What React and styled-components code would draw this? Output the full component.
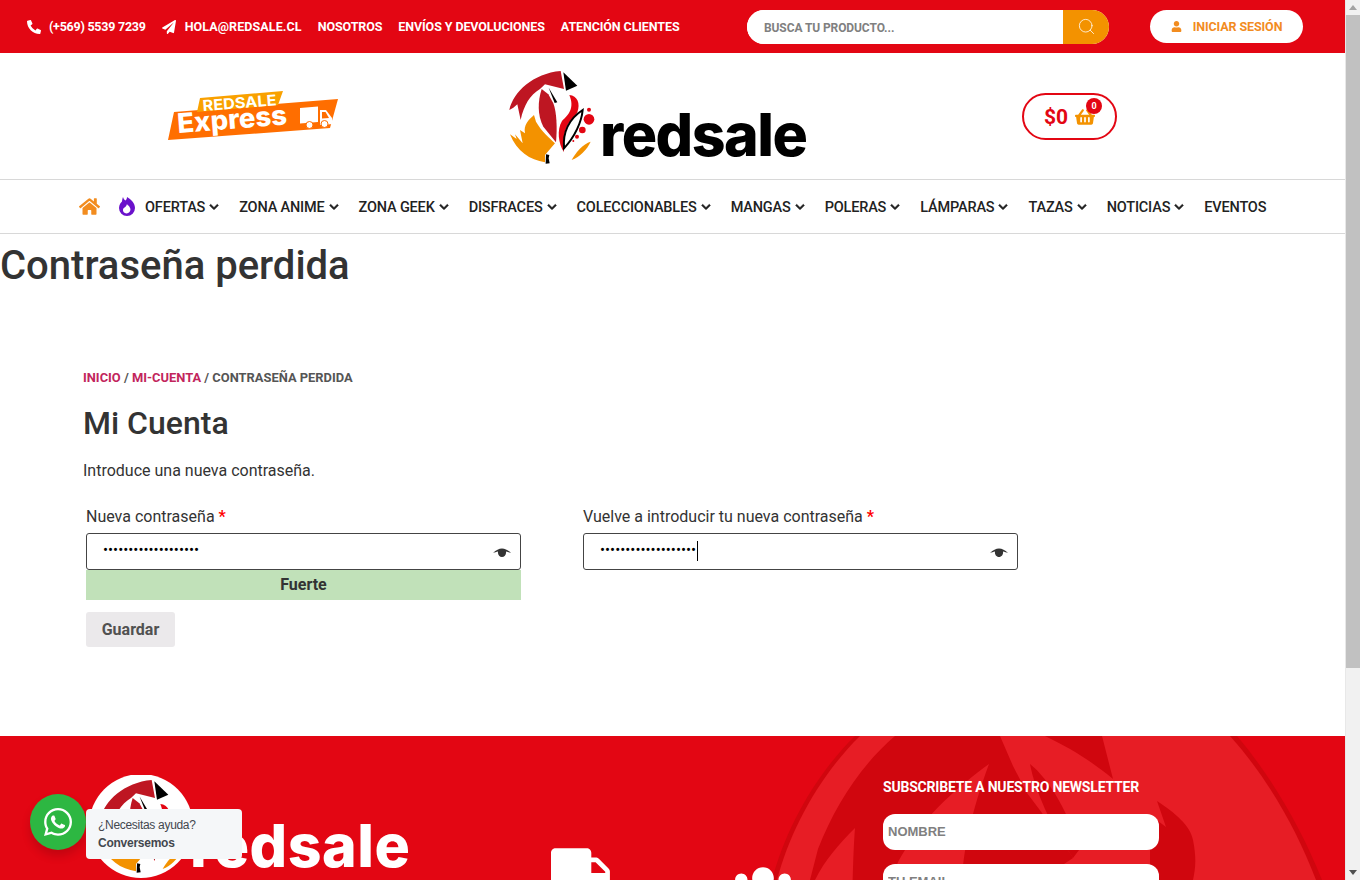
import React from "react";
import styled, { createGlobalStyle } from "styled-components";
import {
  FaPhoneAlt,
  FaPaperPlane,
  FaHome,
  FaChevronDown,
  FaUser,
  FaShoppingBasket,
  FaWhatsapp,
  FaTruck,
  FaUsers,
} from "react-icons/fa";
import { Search } from "lucide-react";

const RED = "#e30613";
const ORANGE = "#f39200";

const GlobalStyle = createGlobalStyle`
  body {
    margin: 0 15px 0 0;
    background: #fff;
    font-family: Roboto, "Liberation Sans", sans-serif;
    color: #333;
  }
  * { box-sizing: border-box; }
`;

const TopBar = styled.div`
  height: 53px;
  background: ${RED};
  display: flex;
  align-items: center;
  padding: 0 42px 0 27px;
`;

const TopLinks = styled.div`
  display: flex;
  align-items: center;
  gap: 16px;
`;

const TopLink = styled.a`
  display: flex;
  align-items: center;
  gap: ${(p) => p.$gap || 8}px;
  color: #fff;
  font-size: 12.5px;
  font-weight: 700;
  letter-spacing: ${(p) => p.$spacing ?? -0.1}px;
  white-space: nowrap;
`;

const TopRight = styled.div`
  margin-left: auto;
  display: flex;
  align-items: center;
  gap: 41px;
`;

const SearchBox = styled.form`
  width: 362px;
  height: 34px;
  margin-top: 1px;
  display: flex;
  border-radius: 17px;
  overflow: hidden;
  background: #fff;
`;

const SearchInput = styled.input`
  flex: 1;
  min-width: 0;
  border: none;
  outline: none;
  padding: 1px 0 0 17px;
  font-family: Roboto, sans-serif;
  font-size: 12px;
  font-weight: 700;
  letter-spacing: -0.1px;
  &::placeholder {
    color: #808080;
    opacity: 1;
  }
`;

const SearchButton = styled.button`
  width: 46px;
  border: none;
  padding: 0 0 2px;
  background: ${ORANGE};
  color: #fff;
  display: flex;
  align-items: center;
  justify-content: center;
`;

const LoginButton = styled.a`
  width: 153px;
  height: 33px;
  border-radius: 17px;
  background: #fff;
  color: #f28c1f;
  display: flex;
  align-items: center;
  justify-content: center;
  gap: 11px;
  font-size: 12.5px;
  font-weight: 700;
  letter-spacing: -0.1px;
`;

const BrandRow = styled.div`
  height: 127px;
  display: flex;
  align-items: center;
  padding-left: 168px;
  border-bottom: 1px solid #d8d8d8;
`;

const ExpressLogo = styled.svg`
  width: 170px;
  height: 50px;
  margin-top: -1px;
  flex: none;
`;

const MainLogo = styled.svg`
  width: 310px;
  height: 105px;
  margin: 3px 0 0 162px;
  flex: none;
`;

const CartPill = styled.a`
  position: relative;
  width: 95px;
  height: 47px;
  margin: 0 0 0 212px;
  border: 2px solid ${RED};
  border-radius: 24px;
  display: flex;
  align-items: center;
  padding: 1px 0 0 20px;
  gap: 7px;
  color: ${RED};
  font-size: 21px;
  font-weight: 700;
`;

const CartBadge = styled.span`
  position: absolute;
  top: 3px;
  right: 13px;
  width: 16px;
  height: 16px;
  border-radius: 50%;
  background: ${RED};
  color: #fff;
  font-size: 9px;
  font-weight: 700;
  display: flex;
  align-items: center;
  justify-content: center;
`;

const Nav = styled.nav`
  height: 54px;
  border-bottom: 1px solid #d8d8d8;
  display: flex;
  align-items: center;
  padding: 1px 0 0 79px;
`;

const NavIcon = styled.span`
  display: flex;
  margin: 0 ${(p) => p.$gap}px 2px 0;
  color: ${(p) => p.$color};
`;

const NavItem = styled.a`
  display: flex;
  align-items: center;
  gap: 4px;
  margin-right: 20px;
  color: #222;
  font-size: 14.5px;
  font-weight: 500;
  letter-spacing: -0.17px;
  white-space: nowrap;
`;

const NavChevron = styled(FaChevronDown)`
  stroke: currentColor;
  stroke-width: 30;
`;

const PageTitle = styled.h1`
  margin: 0;
  height: 61px;
  padding-top: 1px;
  font-size: 40px;
  line-height: 61px;
  font-weight: 500;
  color: #333;
`;

const Content = styled.main`
  padding: 74px 83px 0;
  height: 441px;
`;

const Breadcrumb = styled.div`
  font-size: 12.9px;
  line-height: 18px;
  font-weight: 700;
  color: #555;
  text-transform: uppercase;
  a {
    color: #c2255c;
  }
`;

const AccountTitle = styled.h2`
  margin: 14px 0 0;
  font-size: 32px;
  line-height: 44px;
  font-weight: 500;
  color: #333;
`;

const Intro = styled.p`
  margin: 14px 0 0;
  font-size: 16px;
  line-height: 24px;
  color: #333;
`;

const FormRow = styled.div`
  margin-top: 22px;
  padding-left: 3px;
  display: flex;
  gap: 62px;
`;

const Column = styled.div`
  width: 435px;
`;

const Label = styled.label`
  display: block;
  font-size: 16px;
  line-height: 24px;
  color: #333;
  margin-bottom: 4px;
  b {
    color: #f00;
    font-weight: 700;
  }
`;

const PasswordWrap = styled.div`
  position: relative;
  height: 37px;
`;

const PasswordInput = styled.input`
  width: 100%;
  height: 100%;
  border: 1px solid #444;
  border-radius: 3px;
  outline: none;
  padding: 0 40px 3px 16px;
  font-family: Roboto, sans-serif;
  font-size: 15px;
  color: #000;
`;

const Caret = styled.span`
  position: absolute;
  left: 114px;
  top: 8px;
  width: 1px;
  height: 20px;
  background: #000;
`;

const EyeIcon = styled.svg`
  position: absolute;
  top: 13px;
  right: 10px;
  width: 18px;
  height: 14px;
`;

const Strength = styled.div`
  height: 30px;
  background: #c1e1b9;
  text-align: center;
  font-size: 16px;
  line-height: 30px;
  font-weight: 700;
  color: #333;
`;

const SaveButton = styled.button`
  display: block;
  margin: 12px 0 0 3px;
  width: 89px;
  height: 35px;
  border: none;
  border-radius: 3px;
  background: #ebe9eb;
  color: #515151;
  font-family: Roboto, sans-serif;
  font-size: 16px;
  font-weight: 700;
`;

const Footer = styled.footer`
  position: relative;
  height: 410px;
  background: ${RED};
  overflow: hidden;
  display: flex;
  padding: 39px 0 0 89px;
`;

const FooterFlames = styled.svg`
  position: absolute;
  left: 0;
  top: 0;
  width: 1345px;
  height: 410px;
`;

const FooterLogo = styled.svg`
  position: relative;
  width: 330px;
  height: 110px;
  flex: none;
`;

const FooterIcons = styled.div`
  position: relative;
  display: flex;
  gap: 119px;
  margin: 67px 0 0 132px;
  color: #fff;
  height: 62px;
`;

const PeopleIcon = styled(FaUsers)`
  margin-top: 16px;
`;

const Newsletter = styled.form`
  position: relative;
  width: 276px;
  margin-left: 89px;
  display: flex;
  flex-direction: column;
  gap: 14px;
`;

const NewsTitle = styled.h3`
  margin: 2px 0 3px;
  color: #fff;
  font-size: 14px;
  line-height: 20px;
  font-weight: 700;
  letter-spacing: -0.2px;
  white-space: nowrap;
`;

const NewsInput = styled.input`
  height: 36px;
  border: none;
  outline: none;
  border-radius: 12px;
  padding: 0 5px 2px;
  background: #fff;
  font-family: "Liberation Sans", Arial, sans-serif;
  font-size: 13px;
  font-weight: 700;
  &::placeholder {
    color: #808080;
    opacity: 1;
  }
`;

const ChatWidget = styled.div`
  position: fixed;
  left: 30px;
  top: 794px;
  display: flex;
  align-items: flex-start;
`;

const ChatBubble = styled.a`
  width: 56px;
  height: 56px;
  border-radius: 50%;
  background: #2db742;
  color: #fff;
  display: flex;
  align-items: center;
  justify-content: center;
  box-shadow: 0 6px 10px rgba(0, 0, 0, 0.15);
`;

const ChatCard = styled.div`
  margin-top: 15px;
  width: 156px;
  height: 50px;
  padding: 8px 12px;
  border-radius: 4px;
  background: #f5f7f9;
  color: #43474e;
  font-family: "Liberation Sans", Arial, sans-serif;
  font-size: 12px;
  line-height: 17.5px;
  letter-spacing: -0.3px;
  b {
    display: block;
    letter-spacing: -0.25px;
  }
`;

const ScrollBar = styled.div`
  position: fixed;
  top: 0;
  right: 0;
  width: 15px;
  height: 100vh;
  background: #f1f1f1;
  border-left: 1px solid #e8e8e8;
  display: flex;
  flex-direction: column;
  align-items: center;
`;

const ScrollArrow = styled.span`
  width: 0;
  height: 0;
  margin: ${(p) => (p.$down ? "auto 0 5px" : "5px 0 4px")};
  border-left: 4px solid transparent;
  border-right: 4px solid transparent;
  border-bottom: ${(p) => (p.$down ? "0" : "5px solid #a3a3a3")};
  border-top: ${(p) => (p.$down ? "5px solid #505050" : "0")};
`;

const ScrollThumb = styled.span`
  width: 100%;
  height: 653px;
  margin-top: 1px;
  background: #c1c1c1;
`;

const FoxMark = () => (
  <>
    <path
      fill="#be1622"
      d="M28 135C40 80 100 25 182 18L192 72L135 58L120 72C90 90 72 120 62 165L52 118L40 128Z"
    />
    <path
      fill="#be1622"
      d="M125 72C113 110 112 150 130 185L168 232C172 190 170 140 160 115L145 88Z"
    />
    <path
      fill={ORANGE}
      d="M102 150L108 170C125 200 150 220 165 235L135 270L135 292C90 285 50 260 30 208L50 222L45 208L68 235L60 195L75 205C70 180 85 165 102 150Z"
    />
    <path fill="#000" d="M190 22L232 62L198 77Z" />
    <path fill="#000" d="M146 68L172 112L164 114Z" />
    <path fill="#000" d="M138 268L148 270L146 280L149 295L137 296Z" />
    <path
      fill="#e30613"
      d="M208 90C232 92 242 115 232 142C224 158 208 165 198 190C190 215 190 240 192 262C175 235 170 195 186 168C205 150 225 130 208 90Z"
    />
    <path
      fill="#fff"
      stroke="#000"
      strokeWidth="6"
      d="M248 135C245 170 225 215 192 250C188 200 210 160 248 135Z"
    />
    <circle cx="267" cy="134" r="6" fill="#e30613" />
    <circle cx="267" cy="163" r="16" fill="#e30613" />
    <circle cx="247" cy="195" r="10" fill="#e30613" />
    <circle cx="231" cy="215" r="6" fill="#e30613" />
    <circle cx="220" cy="228" r="3" fill="#e30613" />
    <path fill={ORANGE} d="M272 230C250 235 225 265 215 285C240 275 260 255 272 230Z" />
  </>
);

const Eye = () => (
  <EyeIcon viewBox="0 0 18 14">
    <path
      fill="#333"
      d="M0 7C3 4 6 2.500 9 2.500S15 4 18 7C16.500 6.500 14.500 5.800 13 5.500C13.500 8.500 11.500 11 9 11S4.500 8.500 5 5.500C3.500 5.800 1.500 6.500 0 7Z"
    />
  </EyeIcon>
);

const navItems = [
  "OFERTAS",
  "ZONA ANIME",
  "ZONA GEEK",
  "DISFRACES",
  "COLECCIONABLES",
  "MANGAS",
  "POLERAS",
  "LÁMPARAS",
  "TAZAS",
  "NOTICIAS",
];

export default function App() {
  return (
    <>
      <GlobalStyle />
      <TopBar>
        <TopLinks>
          <TopLink $spacing={-0.25}>
            <FaPhoneAlt size={14} />
            (+569) 5539 7239
          </TopLink>
          <TopLink $gap={9} $spacing={0.1}>
            <FaPaperPlane size={14} />
            HOLA@REDSALE.CL
          </TopLink>
          <TopLink>NOSOTROS</TopLink>
          <TopLink>ENVÍOS Y DEVOLUCIONES</TopLink>
          <TopLink>ATENCIÓN CLIENTES</TopLink>
        </TopLinks>
        <TopRight>
          <SearchBox>
            <SearchInput placeholder="BUSCA TU PRODUCTO..." />
            <SearchButton type="button">
              <Search size={19} strokeWidth={1} />
            </SearchButton>
          </SearchBox>
          <LoginButton>
            <FaUser size={11} />
            INICIAR SESIÓN
          </LoginButton>
        </TopRight>
      </TopBar>

      <BrandRow>
        <ExpressLogo viewBox="0 0 170 50">
          <path fill="#ff6e00" d="M6 21L170 8L162 37L0 49Z" />
          <path fill="#f9a100" d="M32 7L115 0L110 14L29 21Z" />
          <text
            x="35"
            y="20"
            transform="rotate(-4.500 35 20)"
            fill="#fff"
            fontFamily="Inter, sans-serif"
            fontWeight="700"
            fontSize="15"
            textLength="74"
            lengthAdjust="spacingAndGlyphs"
          >
            REDSALE
          </text>
          <text
            x="10"
            y="42"
            transform="rotate(-4.500 10 42)"
            fill="#fff"
            fontFamily="Inter, sans-serif"
            fontWeight="800"
            fontSize="27"
            textLength="110"
            lengthAdjust="spacingAndGlyphs"
          >
            Express
          </text>
          <path
            fill="#fff"
            d="M132 17L150 15.500L150 31L132 32.500ZM152 19L158 19L164 27L164 33L160 33.500L152 34Z"
          />
          <path fill="#ff6e00" d="M154 21L157.500 21L161 27L154 27.500Z" />
          <circle cx="141.500" cy="34" r="3.500" fill="#fff" stroke="#ff6e00" />
          <circle cx="156.500" cy="33" r="3.500" fill="#fff" stroke="#ff6e00" />
        </ExpressLogo>

        <MainLogo viewBox="0 0 310 105">
          <g transform="scale(0.3333)">
            <FoxMark />
          </g>
          <text
            x="100"
            y="91"
            fill="#000"
            fontFamily="Inter, sans-serif"
            fontWeight="800"
            fontSize="59"
            textLength="208"
          >
            redsale
          </text>
        </MainLogo>

        <CartPill>
          $0
          <FaShoppingBasket size={20} color={ORANGE} />
          <CartBadge>0</CartBadge>
        </CartPill>
      </BrandRow>

      <Nav>
        <NavIcon $gap={19} $color="#f28c1f">
          <FaHome size={21} />
        </NavIcon>
        <NavIcon $gap={10} $color="#6a11cb">
          <svg width="16" height="19" viewBox="0 0 16 19">
            <path
              fill="currentColor"
              d="M4 0C4.500 2 5.500 3 6.500 3.500C7.500 2.500 8 1.500 8 0C12 2.500 16 6 16 11A8 8 0 0 1 0 11C0 7.500 2 5.500 3 4.500C3.200 2.500 3.500 1.500 4 0Z"
            />
            <path
              fill="#fff"
              d="M8 7C8.500 8.500 10 8.500 10.500 10C11.800 11.500 11.800 13.500 10.500 15A3.800 3.800 0 0 1 4.500 15C3.500 13 4 11 5.500 10.500C6.500 10 7.500 9 8 7Z"
            />
          </svg>
        </NavIcon>
        {navItems.map((item) => (
          <NavItem key={item}>
            {item}
            <NavChevron size={10} />
          </NavItem>
        ))}
        <NavItem>EVENTOS</NavItem>
      </Nav>

      <PageTitle>Contraseña perdida</PageTitle>

      <Content>
        <Breadcrumb>
          <a>Inicio</a> / <a>Mi-cuenta</a> / Contraseña perdida
        </Breadcrumb>
        <AccountTitle>Mi Cuenta</AccountTitle>
        <Intro>Introduce una nueva contraseña.</Intro>
        <FormRow>
          <Column>
            <Label>
              Nueva contraseña <b>*</b>
            </Label>
            <PasswordWrap>
              <PasswordInput type="password" defaultValue="Redsale2024Segura#1" />
              <Eye />
            </PasswordWrap>
            <Strength>Fuerte</Strength>
          </Column>
          <Column>
            <Label>
              Vuelve a introducir tu nueva contraseña <b>*</b>
            </Label>
            <PasswordWrap>
              <PasswordInput type="password" defaultValue="Redsale2024Segura#1" />
              <Caret />
              <Eye />
            </PasswordWrap>
          </Column>
        </FormRow>
        <SaveButton>Guardar</SaveButton>
      </Content>

      <Footer>
        <FooterFlames viewBox="0 736 1345 410">
          <path fill="#d0060e" d="M855 736C815 775 785 830 772 880L772 1146L1322 1146L1322 880C1300 825 1270 775 1237 736Z" />
          <path fill="#e71d25" d="M860 736C820 775 790 830 777 880L777 1146L1316 1146L1316 880C1295 825 1265 775 1230 736Z" />
          <path fill="#d0060e" d="M895 736C860 766 835 806 818 849L810 880L810 1146L1030 1146L1040 880L1073 858C1065 845 1052 830 1042 813L1027 793L1013 766L1000 736Z" />
          <path fill="#d0060e" d="M1030 764C1050 780 1070 815 1079 850L1073 858C1050 825 1035 790 1030 764Z" />
          <path fill="#d0060e" d="M1045 736L1102 736L1113 779C1090 760 1070 748 1045 736Z" />
          <path fill="#d0060e" d="M1157 801C1175 813 1190 825 1193 840C1197 860 1195 870 1193 880L1188 1146L1150 1146L1150 815L1166 827Z" />
          <path fill="#e71d25" d="M989 764C960 785 925 815 905 850C895 865 890 880 888 900L888 1146L960 1146L962 880C963 850 972 810 989 764Z" />
          <path fill="#e71d25" d="M855 828C838 845 825 860 815 880L815 1146L852 1146C851 1000 851 880 855 828Z" />
        </FooterFlames>

        <FooterLogo viewBox="0 0 330 110">
          <circle cx="52" cy="51" r="52" fill="#fff" />
          <g transform="translate(2 -1) scale(0.3333)">
            <FoxMark />
          </g>
          <text
            x="101"
            y="92"
            fill="#fff"
            fontFamily="Inter, sans-serif"
            fontWeight="800"
            fontSize="59"
            textLength="220"
          >
            redsale
          </text>
        </FooterLogo>

        <FooterIcons>
          <FaTruck size={62} />
          <PeopleIcon size={62} />
        </FooterIcons>

        <Newsletter>
          <NewsTitle>SUBSCRIBETE A NUESTRO NEWSLETTER</NewsTitle>
          <NewsInput placeholder="NOMBRE" />
          <NewsInput placeholder="TU EMAIL" />
        </Newsletter>
      </Footer>

      <ChatWidget>
        <ChatBubble>
          <FaWhatsapp size={32} />
        </ChatBubble>
        <ChatCard>
          ¿Necesitas ayuda?
          <b>Conversemos</b>
        </ChatCard>
      </ChatWidget>

      <ScrollBar>
        <ScrollArrow />
        <ScrollThumb />
        <ScrollArrow $down />
      </ScrollBar>
    </>
  );
}
